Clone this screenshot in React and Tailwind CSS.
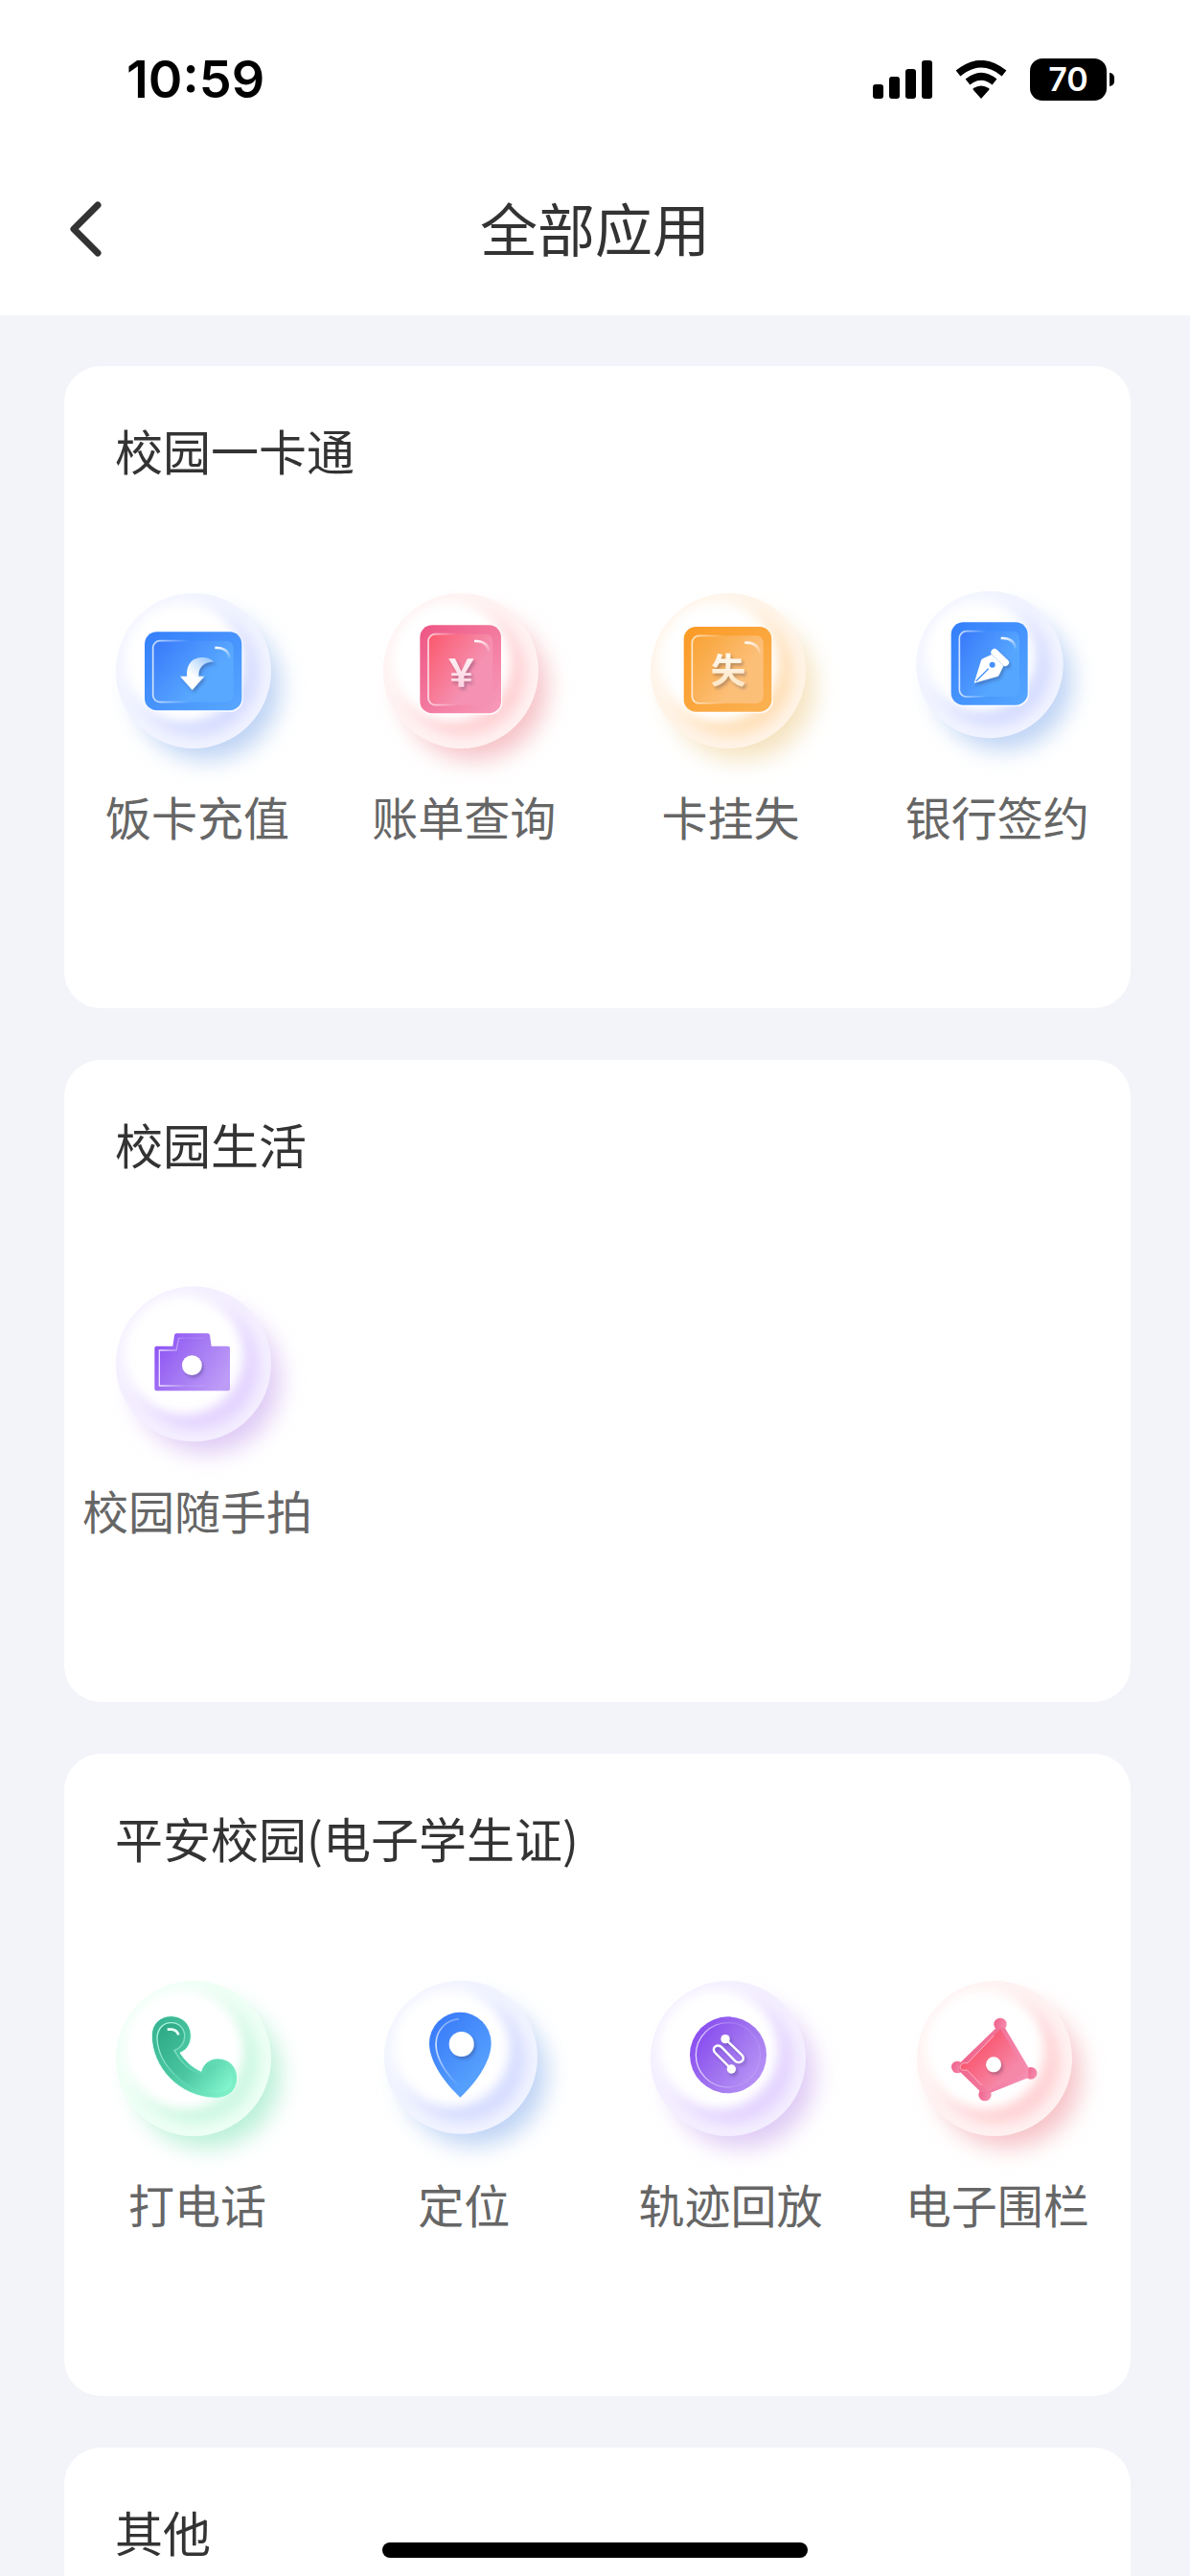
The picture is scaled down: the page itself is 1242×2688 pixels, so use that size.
import React from "react";

const tones = {
    blue: { rim: "#f1f3ff", glow: "#d6ddff", shadow: "#bdd3f4" },
    red: { rim: "#fff2f2", glow: "#ffd3d5", shadow: "#f6c3c7" },
    orange: { rim: "#fff4e8", glow: "#ffe1bb", shadow: "#f5e3bf" },
    purple: { rim: "#f4efff", glow: "#e3d4ff", shadow: "#dfcaf5" },
    green: { rim: "#eefff6", glow: "#cff8e3", shadow: "#b9f0d8" },
};

// Glossy round base shared by every app icon
const Bubble = ({ id, tone, viewBox, cx, cy, r, children }) => {
    const { rim, glow, shadow } = tones[tone];
    return (
        <svg viewBox={viewBox} className="w-[200px] h-[200px] overflow-visible" aria-hidden="true">
            <defs>
                <filter id={`${id}-soft`} x="-50%" y="-50%" width="200%" height="200%">
                    <feGaussianBlur stdDeviation="36" />
                </filter>
                <filter id={`${id}-inner`} x="-50%" y="-50%" width="200%" height="200%">
                    <feGaussianBlur stdDeviation="20" />
                </filter>
                <filter id={`${id}-drop`} x="-50%" y="-50%" width="200%" height="200%">
                    <feDropShadow dx="6" dy="8" stdDeviation="4" floodColor="#333355" floodOpacity="0.3" />
                </filter>
                <clipPath id={`${id}-clip`}>
                    <circle cx={cx} cy={cy} r={r} />
                </clipPath>
            </defs>
            <circle cx={cx + 42} cy={cy + 50} r={r - 14} fill={shadow} filter={`url(#${id}-soft)`} />
            <circle cx={cx} cy={cy} r={r} fill={rim} />
            <g clipPath={`url(#${id}-clip)`}>
                <circle cx={cx + 8} cy={cy + 8} r={r - 46} fill={glow} filter={`url(#${id}-inner)`} />
                <circle cx={cx - 30} cy={cy - 28} r={r - 62} fill="#fff" filter={`url(#${id}-inner)`} />
                <circle cx={cx - 34} cy={cy - 32} r={r - 70} fill="#fff" filter={`url(#${id}-inner)`} />
            </g>
            {children}
        </svg>
    );
};

// Rounded plate with a recessed panel and a small shine in the corner
const Plate = ({ id, x, y, w, h, from, to, innerFrom, innerTo }) => (
    <>
        <defs>
            <linearGradient id={`${id}-plate`} x1="0" y1="0" x2="1" y2="1">
                <stop offset="0" stopColor={from} />
                <stop offset="1" stopColor={to} />
            </linearGradient>
            <linearGradient id={`${id}-panel`} x1="0" y1="0" x2="1" y2="0.7">
                <stop offset="0" stopColor={innerFrom} />
                <stop offset="0.75" stopColor={innerTo} />
            </linearGradient>
            <linearGradient id={`${id}-edge`} x1="0" y1="0" x2="1" y2="0">
                <stop offset="0" stopColor="#fff" stopOpacity="0.75" />
                <stop offset="0.45" stopColor="#fff" stopOpacity="0" />
            </linearGradient>
            <linearGradient id={`${id}-shine`} x1="0" y1="0" x2="1" y2="1">
                <stop offset="0" stopColor="#fff" />
                <stop offset="1" stopColor="#fff" stopOpacity="0.1" />
            </linearGradient>
        </defs>
        <rect x={x + 2} y={y + 2} width={w + 2} height={h + 3} rx="40" fill="#fff" opacity="0.8" />
        <rect x={x} y={y} width={w} height={h} rx="38" fill={`url(#${id}-plate)`} />
        <rect x={x + 26} y={y + 28} width={w - 52} height={h - 54} rx="22" fill={`url(#${id}-panel)`} stroke={`url(#${id}-edge)`} strokeWidth="5" />
        <path
            d={`M${x + w - 84} ${y + 50} h8 q34 2 38 32`}
            fill="none"
            stroke={`url(#${id}-shine)`}
            strokeWidth="8"
        />
    </>
);

const WhiteFade = ({ id, to }) => (
    <linearGradient id={id} x1="0" y1="0" x2="0" y2="1">
        <stop offset="0" stopColor="#fff" />
        <stop offset="1" stopColor={to} />
    </linearGradient>
);

const RechargeIcon = () => (
    <Bubble id="recharge" tone="blue" viewBox="48 30 600 600" cx={336} cy={330} r={243}>
        <Plate id="recharge" x={183} y={208} w={304} h={246} from="#347ffb" to="#58a7ff" innerFrom="#3878fa" innerTo="#58a8ff" />
        <linearGradient id="recharge-arrow" x1="1" y1="0" x2="0" y2="1">
            <stop offset="0" stopColor="#8dc0fc" />
            <stop offset="0.6" stopColor="#fff" />
        </linearGradient>
        <path
            d="M294 347H315C313 306 334 288 364 288Q385 288 400 301C370 303 350 318 352 347H370L332 390Z"
            fill="url(#recharge-arrow)"
            filter="url(#recharge-drop)"
        />
    </Bubble>
);

const BillIcon = () => (
    <Bubble id="bill" tone="red" viewBox="43 30 600 600" cx={334} cy={330} r={243}>
        <Plate id="bill" x={206} y={187} w={254} h={276} from="#ee5583" to="#f79cbb" innerFrom="#fb586c" innerTo="#f591b2" />
        <WhiteFade id="bill-fade" to="#fbc9d9" />
        <text x="335" y="378" textAnchor="middle" fill="url(#bill-fade)" filter="url(#bill-drop)" className="font-['Noto_Sans_CJK_SC',sans-serif] font-bold text-[115px]">
            ￥
        </text>
    </Bubble>
);

const LossIcon = () => (
    <Bubble id="loss" tone="orange" viewBox="38 30 600 600" cx={329} cy={330} r={243}>
        <Plate id="loss" x={190} y={192} w={275} h={266} from="#fb9a25" to="#fbb254" innerFrom="#f9a233" innerTo="#fcbf78" />
        <WhiteFade id="loss-fade" to="#fde2bd" />
        <text x="329" y="368" textAnchor="middle" fill="url(#loss-fade)" filter="url(#loss-drop)" className="font-['Noto_Sans_CJK_SC',sans-serif] font-bold text-[110px]">
            失
        </text>
    </Bubble>
);

const SignIcon = () => (
    <Bubble id="sign" tone="blue" viewBox="33 30 600 600" cx={309} cy={311} r={230}>
        <Plate id="sign" x={188} y={178} w={240} h={259} from="#347ffb" to="#55a6ff" innerFrom="#3878fa" innerTo="#55a6ff" />
        <g filter="url(#sign-drop)">
            <path d="M260 368L282 297Q284 292 290 290L315 279L352 314L339 341Q337 346 332 348Z" fill="#fff" />
            <path d="M324 272L358 304" stroke="#fff" strokeWidth="22" strokeLinecap="round" />
        </g>
        <circle cx="317" cy="311" r="9" fill="#4590fc" />
        <path d="M266 362L305 323" stroke="#4590fc" strokeWidth="4" />
    </Bubble>
);

const CameraIcon = () => (
    <Bubble id="camera" tone="purple" viewBox="108 42 600 600" cx={396} cy={340} r={243}>
        <defs>
            <linearGradient id="camera-body" x1="0" y1="0.2" x2="1" y2="0.7">
                <stop offset="0" stopColor="#8d52f5" />
                <stop offset="0.45" stopColor="#a376f3" />
                <stop offset="1" stopColor="#bd9cf7" />
            </linearGradient>
            <linearGradient id="camera-edge" x1="0" y1="0" x2="1" y2="0">
                <stop offset="0" stopColor="#fff" stopOpacity="0.8" />
                <stop offset="0.6" stopColor="#fff" stopOpacity="0.1" />
            </linearGradient>
        </defs>
        <path
            d="M274 290Q274 284 280 284H331L336 250Q337 244 343 244H440Q446 244 447 250L452 284H504Q510 284 510 290V418Q510 424 504 424H280Q274 424 274 418Z"
            fill="url(#camera-body)"
        />
        <path d="M430 259H350L342 297H289V408H430" fill="none" stroke="url(#camera-edge)" strokeWidth="4" />
        <circle cx="391" cy="344" r="31" fill="#fff" filter="url(#camera-drop)" />
    </Bubble>
);

const PhoneIcon = () => (
    <Bubble id="phone" tone="green" viewBox="48 24 600 600" cx={336} cy={324} r={243}>
        <defs>
            <linearGradient id="phone-body" x1="0" y1="0" x2="1" y2="0.8">
                <stop offset="0" stopColor="#35b18f" />
                <stop offset="0.5" stopColor="#4bc8a3" />
                <stop offset="1" stopColor="#7ef0c8" />
            </linearGradient>
            <linearGradient id="phone-panel" x1="0" y1="0.1" x2="1" y2="0.9">
                <stop offset="0" stopColor="#2da985" />
                <stop offset="0.55" stopColor="#4cc7a2" />
                <stop offset="1" stopColor="#84f7cf" />
            </linearGradient>
            <linearGradient id="phone-edge" x1="0" y1="0" x2="1" y2="0.8">
                <stop offset="0" stopColor="#b8ffe8" />
                <stop offset="0.7" stopColor="#b8ffe8" stopOpacity="0" />
            </linearGradient>
        </defs>
        <path
            d="M205 252C205 215 232 191 266 191C302 191 328 218 328 252C328 280 314 298 294 306C310 332 335 354 360 364C366 340 388 324 412 324C446 324 473 350 473 385C473 425 445 448 405 448C290 445 205 350 205 252Z"
            fill="url(#phone-body)"
            stroke="#e4fff5"
            strokeWidth="3"
        />
        <path
            d="M222 262C222 232 240 212 266 212C292 212 308 232 308 254C308 278 296 290 276 299C298 340 330 368 370 378C376 352 390 342 412 342C436 342 458 360 458 386C458 415 440 432 405 432C310 428 226 345 222 262Z"
            fill="url(#phone-panel)"
            stroke="url(#phone-edge)"
            strokeWidth="4"
        />
        <path d="M254 233H268Q284 235 289 250" fill="none" stroke="#eafff8" strokeWidth="8" />
    </Bubble>
);

const LocateIcon = () => (
    <Bubble id="locate" tone="blue" viewBox="43 24 600 600" cx={334} cy={320} r={240}>
        <defs>
            <linearGradient id="locate-body" x1="0" y1="0" x2="0.8" y2="1">
                <stop offset="0" stopColor="#3474f8" />
                <stop offset="0.8" stopColor="#559ffd" />
            </linearGradient>
            <linearGradient id="locate-edge" x1="0" y1="0" x2="0" y2="1">
                <stop offset="0" stopColor="#fff" stopOpacity="0.3" />
                <stop offset="0.4" stopColor="#cfe1ff" />
                <stop offset="1" stopColor="#fff" stopOpacity="0" />
            </linearGradient>
        </defs>
        <path d="M332 446C285 402 235 335 235 276A97 97 0 0 1 429 276C429 335 379 402 332 446Z" fill="url(#locate-body)" />
        <path d="M328 200C285 204 256 238 256 280C256 325 290 375 330 412" fill="none" stroke="url(#locate-edge)" strokeWidth="5" />
        <circle cx="336" cy="279" r="39" fill="#fff" filter="url(#locate-drop)" />
    </Bubble>
);

const TrackIcon = () => (
    <Bubble id="track" tone="purple" viewBox="38 24 600 600" cx={329} cy={324} r={243}>
        <defs>
            <linearGradient id="track-body" x1="0" y1="0.1" x2="1" y2="0.8">
                <stop offset="0" stopColor="#8446f0" />
                <stop offset="0.5" stopColor="#9e70ef" />
                <stop offset="1" stopColor="#b894f6" />
            </linearGradient>
            <linearGradient id="track-edge" x1="0" y1="0" x2="1" y2="0">
                <stop offset="0" stopColor="#fff" stopOpacity="0.75" />
                <stop offset="0.6" stopColor="#fff" stopOpacity="0.1" />
            </linearGradient>
        </defs>
        <circle cx="329" cy="313" r="120" fill="url(#track-body)" />
        <circle cx="329" cy="313" r="101" fill="url(#track-body)" stroke="url(#track-edge)" strokeWidth="4" />
        <g filter="url(#track-drop)">
            <path
                d="M339 357L288 306C274 290 296 276 310 290L350 331C364 345 386 328 372 313L320 263"
                fill="none"
                stroke="#fff"
                strokeWidth="7"
            />
            <circle cx="320" cy="263" r="14" fill="#fff" />
            <circle cx="339" cy="357" r="14" fill="#fff" />
        </g>
    </Bubble>
);

const FenceIcon = () => (
    <Bubble id="fence" tone="red" viewBox="33 24 600 600" cx={324} cy={324} r={243}>
        <defs>
            <linearGradient id="fence-body" x1="0" y1="0.2" x2="1" y2="0.6">
                <stop offset="0" stopColor="#ef5f88" />
                <stop offset="1" stopColor="#f58db0" />
            </linearGradient>
            <linearGradient id="fence-panel" x1="0.2" y1="0.2" x2="0.75" y2="0.7">
                <stop offset="0" stopColor="#fa4f66" />
                <stop offset="1" stopColor="#f588a8" />
            </linearGradient>
        </defs>
        <g fill="url(#fence-body)">
            <circle cx="342" cy="217" r="20" />
            <circle cx="208" cy="351" r="19" />
            <circle cx="438" cy="370" r="19" />
            <circle cx="294" cy="437" r="20" />
            <path d="M330 227L356 227L430 352L430 384L310 432L280 428L214 364L214 340Z" />
        </g>
        <path d="M342 232L424 366L304 426L282 404L238 360Q216 366 216 350Q218 336 240 338Z" fill="url(#fence-panel)" />
        <path d="M322 252L240 338Q218 336 216 350Q216 364 238 360L284 408" fill="none" stroke="#ffb3c3" strokeWidth="3" />
        <circle cx="321" cy="343" r="24" fill="#fff" filter="url(#fence-drop)" />
    </Bubble>
);

const sections = [
    {
        title: "校园一卡通",
        apps: [
            { name: "饭卡充值", icon: RechargeIcon },
            { name: "账单查询", icon: BillIcon },
            { name: "卡挂失", icon: LossIcon },
            { name: "银行签约", icon: SignIcon },
        ],
    },
    {
        title: "校园生活",
        apps: [{ name: "校园随手拍", icon: CameraIcon }],
    },
    {
        title: "平安校园(电子学生证)",
        apps: [
            { name: "打电话", icon: PhoneIcon },
            { name: "定位", icon: LocateIcon },
            { name: "轨迹回放", icon: TrackIcon },
            { name: "电子围栏", icon: FenceIcon },
        ],
    },
    { title: "其他", apps: [] },
];

const StatusBar = () => (
    <div className="flex items-center justify-between h-[166px] pl-[132px] pr-[79px] text-black font-['Inter',sans-serif]">
        <span className="text-[54px] leading-[60px] font-semibold">10:59</span>
        <div className="flex items-center gap-6">
            <svg viewBox="0 0 62 40" className="w-[62px] h-10" aria-hidden="true">
                <rect x="0" y="25" width="11" height="15" rx="3" />
                <rect x="17" y="17" width="11" height="23" rx="3" />
                <rect x="34" y="9" width="11" height="31" rx="3" />
                <rect x="51" y="0" width="11" height="40" rx="3" />
            </svg>
            <svg viewBox="0 0 54 40" className="w-[54px] h-10" aria-hidden="true">
                <path d="M27 40L19 31Q18 30 19 29Q27 24 35 29Q36 30 35 31Z" />
                <path d="M13 22.5Q27 11 41 22.5" fill="none" stroke="#000" strokeWidth="7.5" />
                <path d="M3 13.5Q27 -6 51 13.5" fill="none" stroke="#000" strokeWidth="7.5" />
            </svg>
            <div className="flex items-center gap-[3px]">
                <div className="flex items-center justify-center w-20 h-11 rounded-[13px] bg-black text-white text-[34px] leading-[44px] font-semibold">
                    70
                </div>
                <div className="w-[5px] h-[14px] rounded-r-full bg-black" />
            </div>
        </div>
    </div>
);

const AppSection = ({ title, apps }) => (
    <section className="shrink-0 min-h-[670px] pt-[47px] rounded-[38px] bg-white">
        <h2 className="px-[53px] text-[50px] leading-[80px] text-[#333333]">{title}</h2>
        <div className="grid grid-cols-4 mt-[91px]">
            {apps.map(({ name, icon: Icon }) => (
                <button key={name} type="button" className="flex flex-col items-center gap-[21px]">
                    <Icon />
                    <span className="text-[48px] leading-[60px] whitespace-nowrap text-[#666666]">{name}</span>
                </button>
            ))}
        </div>
    </section>
);

const App = () => {
    return (
        <div className="flex flex-col h-screen overflow-hidden bg-[#f3f4f9] font-['Noto_Sans_CJK_SC',sans-serif]">
            <header className="shrink-0 bg-white">
                <StatusBar />
                <div className="grid grid-cols-[1fr_auto_1fr] items-start h-[163px] pt-[31px] px-[68px]">
                    <button type="button" aria-label="返回" className="justify-self-start pt-[10px]">
                        <svg viewBox="0 0 44 64" className="w-11 h-16" fill="none" stroke="#333333" strokeWidth="7" strokeLinecap="round" strokeLinejoin="round">
                            <path d="M34 7L9 32L34 57" />
                        </svg>
                    </button>
                    <h1 className="text-[60px] leading-[80px] text-[#333333]">全部应用</h1>
                </div>
            </header>

            <main className="flex flex-col flex-1 gap-[54px] min-h-0 overflow-y-auto [scrollbar-width:none] pt-[53px] pl-[67px] pr-[62px]">
                {sections.map((section) => (
                    <AppSection key={section.title} {...section} />
                ))}
            </main>

            <div className="fixed bottom-[19px] left-1/2 -translate-x-1/2 w-[444px] h-4 rounded-full bg-black" />
        </div>
    );
};

export default App;
